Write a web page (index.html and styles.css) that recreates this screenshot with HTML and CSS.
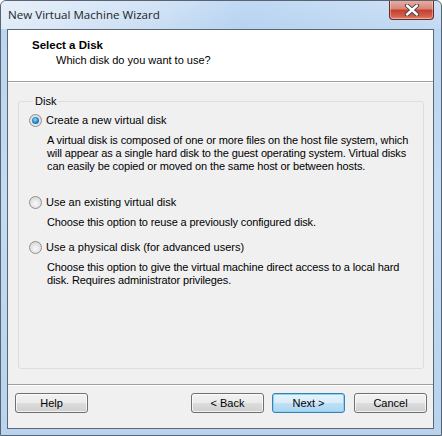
FILE: index.html
```html
<!DOCTYPE html>
<html>
<head>
<meta charset="utf-8">
<link rel="stylesheet" href="styles.css">
</head>
<body>
<div class="window">
  <div class="titlebar">
    <span class="title">New Virtual Machine Wizard</span>
    <div class="close">
      <svg width="18" height="12" viewBox="0 0 18 12">
        <path d="M4 1.5 L14 10.5 M14 1.5 L4 10.5" stroke="#3b3b3b" stroke-width="4.2" stroke-linecap="round"/>
        <path d="M4 1.5 L14 10.5 M14 1.5 L4 10.5" stroke="#ffffff" stroke-width="2.4" stroke-linecap="round"/>
      </svg>
    </div>
  </div>
  <div class="client">
    <div class="header">
      <div class="h-title">Select a Disk</div>
      <div class="h-sub">Which disk do you want to use?</div>
    </div>
    <div class="content">
      <fieldset class="group">
        <legend class="legend">Disk</legend>
        <div class="option">
          <div class="opt-label"><span class="radio checked"></span>Create a new virtual disk</div>
          <div class="opt-desc tall">A virtual disk is composed of one or more files on the host file system, which will appear as a single hard disk to the guest operating system. Virtual disks can easily be copied or moved on the same host or between hosts.</div>
        </div>
        <div class="option">
          <div class="opt-label"><span class="radio"></span>Use an existing virtual disk</div>
          <div class="opt-desc">Choose this option to reuse a previously configured disk.</div>
        </div>
        <div class="option">
          <div class="opt-label"><span class="radio"></span>Use a physical disk (for advanced users)</div>
          <div class="opt-desc">Choose this option to give the virtual machine direct access to a local hard disk. Requires administrator privileges.</div>
        </div>
      </fieldset>
    </div>
    <div class="footer">
      <button class="btn">Help</button>
      <div class="spacer"></div>
      <button class="btn">&lt; Back</button>
      <button class="btn default">Next &gt;</button>
      <button class="btn cancel">Cancel</button>
    </div>
  </div>
</div>
</body>
</html>
```

FILE: styles.css
```css
html, body {
  margin: 0;
  padding: 0;
  background: #ffffff;
}
.window {
  width: 442px;
  height: 436px;
  box-sizing: border-box;
  border: 1px solid #5a6470;
  border-radius: 6px 6px 0 0;
  background: linear-gradient(to bottom, #c9def5 0px, #bcd5f0 30px, #c3dbf3 200px, #b9d3ee 436px);
  display: flex;
  flex-direction: column;
  overflow: hidden;
}
.titlebar {
  height: 28px;
  display: flex;
  align-items: flex-start;
  background: linear-gradient(100deg, rgba(255,255,255,0.55) 0%, rgba(255,255,255,0.2) 35%, rgba(170,205,240,0.3) 55%, rgba(255,255,255,0.1) 100%);
}
.title {
  font-family: "Open Sans", "Noto Sans", sans-serif;
  font-size: 11.6px;
  color: #1e1e1e;
  margin-left: 7px;
  margin-top: 6px;
}
.close {
  margin-left: auto;
  margin-right: 7px;
  margin-top: -1px;
  width: 45px;
  height: 20px;
  box-sizing: border-box;
  border: 1px solid #6b2a22;
  border-top: none;
  border-radius: 0 0 4px 4px;
  background: linear-gradient(to bottom, #eab1a5 0%, #d8867a 45%, #c4412f 55%, #d35f4c 85%, #e18a74 100%);
  box-shadow: inset 0 0 0 1px rgba(255,255,255,0.35);
  display: flex;
  align-items: center;
  justify-content: center;
}
.client {
  margin: 0 7px 6px 6px;
  flex: 1;
  border: 1px solid #5b6673;
  background: #f0f0f0;
  display: flex;
  flex-direction: column;
  font-family: "Liberation Sans", Arial, sans-serif;
  font-size: 11px;
  color: #000;
}
.header {
  height: 51px;
  background: #ffffff;
  border-bottom: 1px solid #a0a0a0;
  box-sizing: content-box;
}
.h-title {
  font-weight: bold;
  margin: 9px 0 0 24px;
  line-height: 13px;
  font-size: 11.5px;
}
.h-sub {
  margin: 2px 0 0 48px;
  line-height: 13px;
}
.content {
  flex: 1;
  padding: 12px 9px 0 10px;
  border-top: 1px solid #ffffff;
}
.group {
  margin: 0;
  padding: 6px 0 0 10px;
  border: 1px solid #d5dfe5;
  border-radius: 3px;
  height: 274px;
  box-sizing: border-box;
}
.legend {
  padding: 0 2px;
  margin-left: 4px;
  line-height: 13px;
}
.option {
  margin-bottom: 12px;
}
.opt-label {
  display: flex;
  align-items: center;
  line-height: 13px;
  height: 13px;
}
.radio {
  width: 11px;
  height: 11px;
  border: 1px solid #8e8f8f;
  border-radius: 50%;
  background: radial-gradient(circle at 50% 60%, #f9f9f9 0%, #dcdcdc 70%, #c9c9c9 100%);
  margin-right: 4px;
  position: relative;
  flex: none;
}
.radio.checked::after {
  content: "";
  position: absolute;
  left: 2px;
  top: 2px;
  width: 7px;
  height: 7px;
  border-radius: 50%;
  background: radial-gradient(circle at 45% 40%, #8fe0ff 0%, #2c8fd0 45%, #0d3f78 100%);
}
.opt-desc {
  margin: 7px 0 0 18px;
  line-height: 13px;
  width: 374px;
  letter-spacing: -0.12px;
}
.opt-desc.tall {
  min-height: 50px;
}
.footer {
  height: 35px;
  border-top: 1px solid #a0a0a0;
  box-shadow: inset 0 1px 0 #ffffff;
  display: flex;
  align-items: flex-start;
  padding: 8px 6px 0 7px;
  gap: 8px;
}
.spacer {
  flex: 1;
}
.btn {
  width: 73px;
  height: 20px;
  border: 1px solid #707070;
  border-radius: 3px;
  background: linear-gradient(to bottom, #f2f2f2 0%, #ebebeb 48%, #dddddd 52%, #cfcfcf 100%);
  box-shadow: inset 0 0 0 1px rgba(255,255,255,0.7);
  font-family: "Liberation Sans", Arial, sans-serif;
  font-size: 11px;
  color: #000;
  padding: 0;
  line-height: 16px;
}
.btn.default {
  border-color: #3c7fb1;
  background: linear-gradient(to bottom, #e5f3fb 0%, #d9edf9 48%, #bfe0f5 52%, #acd6f2 100%);
  box-shadow: inset 0 0 0 1px #8ad2f6;
}
.btn.cancel {
  margin-left: 1px;
}
```
